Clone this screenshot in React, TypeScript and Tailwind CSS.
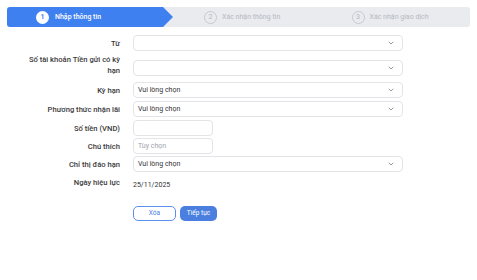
import React from 'react'

const Chevron = () => (
  <svg width="6" height="4" viewBox="0 0 6 4" className="shrink-0">
    <path d="M0.8 0.8 L3 3 L5.2 0.8" fill="none" stroke="#8a8f99" strokeWidth="0.9" />
  </svg>
)

function SelectBox({ value }: { value?: string }) {
  return (
    <div className="flex h-[16px] w-[270px] items-center justify-between rounded-[4px] border border-[#e2e4e8] bg-white pl-[4px] pr-[8px]">
      <span className="text-[7px] text-[#333]">{value}</span>
      <Chevron />
    </div>
  )
}

function Row({ label, children, className = '' }: { label: React.ReactNode; children: React.ReactNode; className?: string }) {
  return (
    <div className={`flex items-center ${className}`}>
      <div className="w-[96px] shrink-0 text-right text-[7.6px] font-medium leading-[11px] text-[#3a3a3a]">{label}</div>
      <div className="ml-[13px]">{children}</div>
    </div>
  )
}

export default function App() {
  const steps = [
    { n: 2, label: 'Xác nhận thông tin', pad: 'pl-[31px]' },
    { n: 3, label: 'Xác nhận giao dịch', pad: 'pl-[29px]' },
  ]

  return (
    <div className="h-[280px] w-[477px] bg-white font-['Roboto',sans-serif]">
      <div className="px-[7px] pt-[7px]">
        <div className="flex h-[20px] rounded-[3px] bg-[#e9ebef]">
          <div className="flex w-[166px] items-center rounded-l-[3px] bg-[#3f80f1] pl-[29px] [clip-path:polygon(0_0,156px_0,166px_50%,156px_100%,0_100%)]">
            <span className="flex h-[13px] w-[13px] items-center justify-center rounded-full bg-white text-[7px] font-bold text-[#3f80f1]">1</span>
            <span className="ml-[6px] text-[7px] font-medium text-white">Nhập thông tin</span>
          </div>
          {steps.map((s) => (
            <div key={s.n} className={`flex flex-1 items-center ${s.pad}`}>
              <span className="flex h-[13px] w-[13px] items-center justify-center rounded-full border border-[#c6c9cf] text-[7px] text-[#b5b9c0]">{s.n}</span>
              <span className="ml-[5px] text-[7px] text-[#b5b9c0]">{s.label}</span>
            </div>
          ))}
        </div>
      </div>

      <div className="ml-[24px] mt-[7px] flex flex-col">
        <Row label="Từ" className="h-[18px]">
          <SelectBox />
        </Row>
        <Row label={<>Số tài khoản Tiền gửi có kỳ<br />hạn</>} className="mt-[2px] h-[22px] !items-end">
          <SelectBox />
        </Row>
        <Row label="Kỳ hạn" className="mt-[5px] h-[18px]">
          <SelectBox value="Vui lòng chọn" />
        </Row>
        <Row label="Phương thức nhận lãi" className="mt-[1px] h-[18px]">
          <SelectBox value="Vui lòng chọn" />
        </Row>
        <Row label="Số tiền (VND)" className="mt-[1px] h-[18px]">
          <div className="h-[16px] w-[80px] rounded-[4px] border border-[#e2e4e8] bg-white" />
        </Row>
        <Row label="Chú thích" className="h-[18px]">
          <div className="flex h-[16px] w-[80px] items-center rounded-[4px] border border-[#e2e4e8] bg-white pl-[4px] text-[7px] text-[#a0a4ab]">
            Tùy chọn
          </div>
        </Row>
        <Row label="Chỉ thị đáo hạn" className="h-[18px]">
          <SelectBox value="Vui lòng chọn" />
        </Row>
        <Row label="Ngày hiệu lực" className="h-[18px]">
          <span className="text-[7px] text-[#333]">25/11/2025</span>
        </Row>
      </div>

      <div className="ml-[133px] mt-[15px] flex gap-[4px]">
        <button className="flex h-[15px] w-[43px] items-center justify-center rounded-[5px] border border-[#5b8ff0] bg-white text-[6.5px] text-[#4a7fe0]">
          Xóa
        </button>
        <button className="flex h-[15px] w-[37px] items-center justify-center rounded-[5px] bg-[#4a7fe0] text-[6.5px] text-white">
          Tiếp tục
        </button>
      </div>
    </div>
  )
}
